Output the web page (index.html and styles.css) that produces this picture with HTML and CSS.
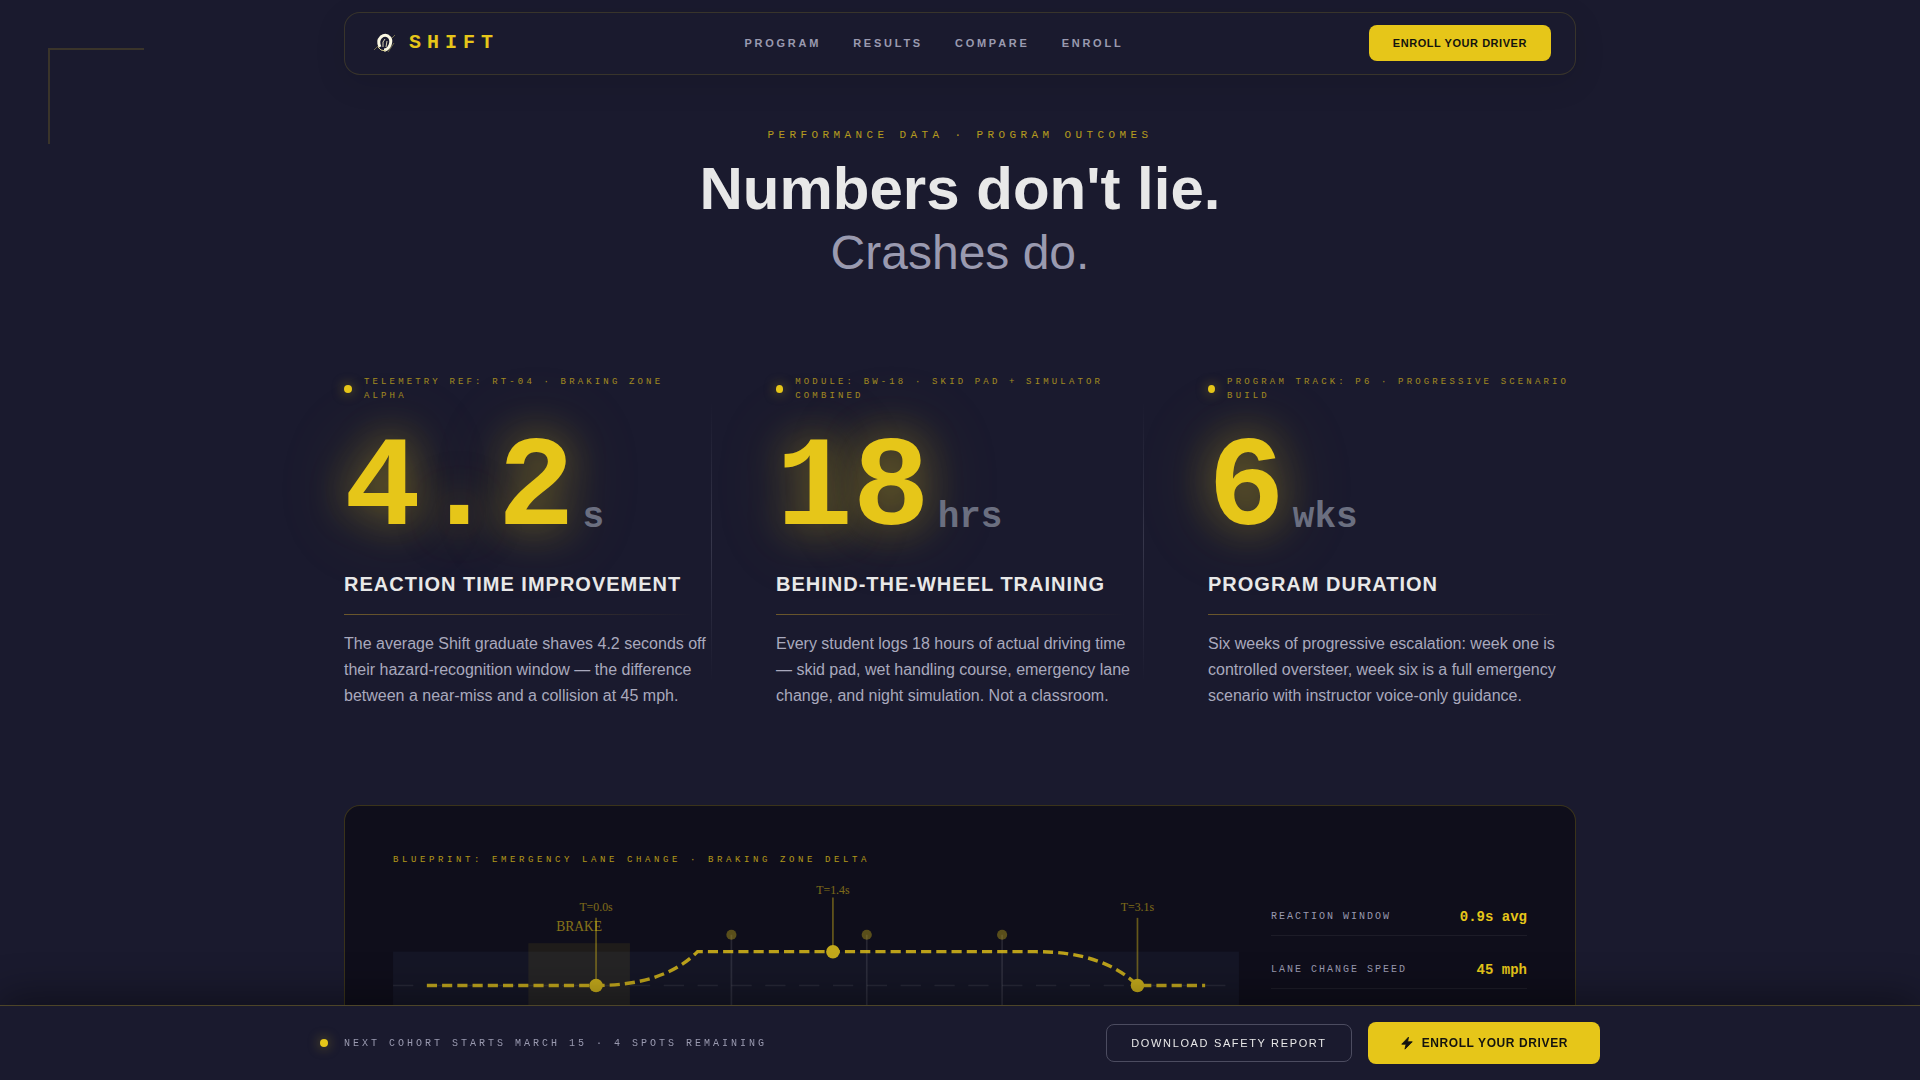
FILE: index.html
```html
<!DOCTYPE html>
<html lang="en">
<head>
<meta charset="utf-8">
<meta name="viewport" content="width=device-width, initial-scale=1">
<title>Shift — Performance Data</title>
<link rel="stylesheet" href="styles.css">
</head>
<body>
<div class="corner" aria-hidden="true"></div>

<header class="site-header">
  <a class="brand" href="#">
    <svg class="brand-mark" viewBox="0 0 32 32" aria-hidden="true">
      <path d="M5 23 L10 18 M22 12 L26 8 M9 14 L12 9 M19 25 L25 16" stroke="#6f6a4a" stroke-width="1" fill="none"/>
      <path d="M11 20 Q8 14 12 10 Q17 6 21 11 Q23 15 20 20 Q18 23 15 23" fill="none" stroke="#fbf8e2" stroke-width="3"/>
      <path d="M9 20 Q11 24 17 24" fill="none" stroke="#d9cf90" stroke-width="1"/>
      <path d="M14 20 V15 L16 12 M17 20 L18 14" fill="none" stroke="#d8d2b4" stroke-width="1"/>
    </svg>
    <span>SHIFT</span>
  </a>
  <nav class="site-nav" aria-label="Main">
    <a href="#program">PROGRAM</a>
    <a href="#results">RESULTS</a>
    <a href="#compare">COMPARE</a>
    <a href="#enroll">ENROLL</a>
  </nav>
  <button class="btn btn-small" type="button">ENROLL YOUR DRIVER</button>
</header>

<main class="page">
  <section class="hero">
    <p class="eyebrow">PERFORMANCE DATA · PROGRAM OUTCOMES</p>
    <h1>Numbers don't lie.<span>Crashes do.</span></h1>
  </section>

  <section class="stats" id="results">
    <article class="stat">
      <p class="stat-ref"><i class="dot"></i><span>TELEMETRY REF: RT-04 · BRAKING ZONE ALPHA</span></p>
      <p class="stat-value"><strong>4.2</strong><span>s</span></p>
      <h2>REACTION TIME IMPROVEMENT</h2>
      <p class="stat-text">The average Shift graduate shaves 4.2 seconds off their hazard-recognition window — the difference between a near-miss and a collision at 45 mph.</p>
    </article>
    <article class="stat">
      <p class="stat-ref"><i class="dot"></i><span>MODULE: BW-18 · SKID PAD + SIMULATOR COMBINED</span></p>
      <p class="stat-value"><strong>18</strong><span>hrs</span></p>
      <h2>BEHIND-THE-WHEEL TRAINING</h2>
      <p class="stat-text">Every student logs 18 hours of actual driving time — skid pad, wet handling course, emergency lane change, and night simulation. Not a classroom.</p>
    </article>
    <article class="stat">
      <p class="stat-ref"><i class="dot"></i><span>PROGRAM TRACK: P6 · PROGRESSIVE SCENARIO BUILD</span></p>
      <p class="stat-value"><strong>6</strong><span>wks</span></p>
      <h2>PROGRAM DURATION</h2>
      <p class="stat-text">Six weeks of progressive escalation: week one is controlled oversteer, week six is a full emergency scenario with instructor voice-only guidance.</p>
    </article>
  </section>

  <section class="blueprint">
    <p class="blueprint-title">BLUEPRINT: EMERGENCY LANE CHANGE · BRAKING ZONE DELTA</p>
    <div class="blueprint-body">
      <svg class="diagram" viewBox="0 0 500 120" role="img" aria-label="Emergency lane change path">
        <rect class="road" x="0" y="40" width="500" height="40"/>
        <line class="lane" x1="0" y1="60" x2="500" y2="60"/>
        <rect class="brake-zone" x="80" y="35" width="60" height="50"/>
        <text class="zone-label" x="110" y="28">BRAKE</text>
        <g class="cone"><line x1="200" y1="30" x2="200" y2="90"/><circle cx="200" cy="30" r="3"/></g>
        <g class="cone"><line x1="280" y1="30" x2="280" y2="90"/><circle cx="280" cy="30" r="3"/></g>
        <g class="cone"><line x1="360" y1="30" x2="360" y2="90"/><circle cx="360" cy="30" r="3"/></g>
        <path class="route" d="M20 60 H120 Q160 60 180 40 H380 Q420 40 440 60 H480"/>
        <g class="mark"><line x1="120" y1="60" x2="120" y2="20"/><circle cx="120" cy="60" r="4"/><text x="120" y="16">T=0.0s</text></g>
        <g class="mark"><line x1="260" y1="40" x2="260" y2="8"/><circle cx="260" cy="40" r="4"/><text x="260" y="6">T=1.4s</text></g>
        <g class="mark"><line x1="440" y1="60" x2="440" y2="20"/><circle cx="440" cy="60" r="4"/><text x="440" y="16">T=3.1s</text></g>
      </svg>
      <dl class="readout">
        <div><dt>REACTION WINDOW</dt><dd>0.9s avg</dd></div>
        <div><dt>LANE CHANGE SPEED</dt><dd>45 mph</dd></div>
      </dl>
    </div>
  </section>
</main>

<aside class="cta-bar">
  <div class="cta-inner">
    <p class="cta-note"><i class="dot"></i><span>NEXT COHORT STARTS MARCH 15 · 4 SPOTS REMAINING</span></p>
    <div class="cta-actions">
      <button class="btn-outline" type="button">DOWNLOAD SAFETY REPORT</button>
      <button class="btn btn-large" type="button">
        <svg viewBox="0 0 24 24" aria-hidden="true"><path d="M14.5 2 L3 14 H10.5 L8.5 22.5 L21 10 H13 Z" fill="currentColor" stroke="currentColor" stroke-width="1.5" stroke-linejoin="round"/></svg>
        <span>ENROLL YOUR DRIVER</span>
      </button>
    </div>
  </div>
</aside>
</body>
</html>
```
FILE: styles.css
```css
:root {
  --bg: #1a1a2e;
  --panel: #0f0e1b;
  --yellow: #e6c619;
  --text: #e8e8e8;
  --muted: #9a9ab0;
  --sans: "Liberation Sans", Arial, sans-serif;
  --mono: "Liberation Mono", "Courier New", monospace;
}

* { box-sizing: border-box; }

body {
  margin: 0;
  background: var(--bg);
  color: var(--text);
  font-family: var(--sans);
  position: relative;
}

p, h1, h2, dl, dd { margin: 0; }
a { text-decoration: none; color: inherit; }
button { font-family: inherit; cursor: pointer; }

.corner {
  position: absolute;
  left: 48px;
  top: 48px;
  width: 96px;
  height: 96px;
  border-left: 2px solid rgba(230, 190, 25, 0.16);
  border-top: 2px solid rgba(230, 190, 25, 0.16);
}

.site-header {
  position: sticky;
  top: 12px;
  z-index: 5;
  width: calc(100% - 48px);
  max-width: 1232px;
  margin: 12px auto 0;
  padding: 12px 24px 13px;
  display: flex;
  align-items: center;
  justify-content: space-between;
  background: var(--bg);
  border: 1px solid rgba(230, 198, 25, 0.15);
  border-radius: 16px;
  box-shadow: 0 8px 32px rgba(0, 0, 0, 0.1);
}

.brand {
  display: flex;
  align-items: center;
  gap: 8px;
  font: 700 20px/24px var(--mono);
  letter-spacing: 0.3em;
  color: var(--yellow);
}
.brand-mark { width: 32px; height: 32px; }

.site-nav {
  display: flex;
  gap: 32px;
  font-size: 11px;
  line-height: 12px;
  font-weight: 700;
  letter-spacing: 0.25em;
  color: var(--muted);
}

.btn {
  display: flex;
  align-items: center;
  gap: 8px;
  border: 0;
  border-radius: 8px;
  background: var(--yellow);
  color: #14140f;
  font-weight: 700;
  letter-spacing: 0.05em;
}
.btn-small { padding: 12px 24px; font-size: 11px; line-height: 12px; }
.btn-large { padding: 14px 32px; font-size: 12px; line-height: 14px; }
.btn-large svg { width: 14px; height: 14px; }

.page {
  max-width: 1280px;
  margin: 0 auto;
  padding: 0 24px 180px;
}

.hero { padding: 52px 0 88px; text-align: center; }
.eyebrow {
  font: 11px/16px var(--mono);
  letter-spacing: 0.4em;
  color: var(--yellow);
  opacity: 0.75;
  margin-bottom: 16px;
}
h1 { font-size: 60px; line-height: 60px; font-weight: 700; }
h1 span {
  display: block;
  font-size: 48px;
  line-height: 68px;
  font-weight: 400;
  color: var(--muted);
}

.stats {
  display: grid;
  grid-template-columns: repeat(3, 1fr);
  gap: 64px;
}
.stat { position: relative; }
.stat:not(:last-child)::after {
  content: "";
  position: absolute;
  right: 0;
  top: 8%;
  bottom: 8%;
  width: 1px;
  background: linear-gradient(to bottom, transparent, rgba(200, 200, 220, 0.16), transparent);
}
.dot {
  width: 8px;
  height: 8px;
  border-radius: 50%;
  background: var(--yellow);
  box-shadow: 0 0 12px rgba(230, 198, 25, 0.5);
}
.stat-ref {
  display: flex;
  align-items: center;
  gap: 12px;
  font: 9px/14px var(--mono);
  letter-spacing: 0.35em;
  color: var(--yellow);
}
.stat-ref span { opacity: 0.65; }
.stat-value {
  display: flex;
  align-items: flex-end;
  gap: 8px;
  margin: 23px 0 16px;
  font-family: var(--mono);
  font-weight: 700;
}
.stat-value strong {
  font-size: 128px;
  line-height: 128px;
  color: var(--yellow);
  text-shadow: 0 0 40px rgba(230, 198, 25, 0.4), 0 0 80px rgba(230, 198, 25, 0.25);
}
.stat-value span {
  font-size: 36px;
  line-height: 36px;
  margin-bottom: 18px;
  color: #6b6f80;
}
.stat h2 {
  font-size: 20px;
  line-height: 28px;
  letter-spacing: 0.05em;
}
.stat h2::after {
  content: "";
  display: block;
  height: 1px;
  margin: 16px 0;
  background: linear-gradient(to right, rgba(230, 180, 40, 0.4), transparent 95%);
}
.stat-text { font-size: 16px; line-height: 26px; color: #a9a9bd; }

.blueprint {
  margin-top: 96px;
  padding: 48px;
  background: var(--panel);
  border: 1px solid rgba(230, 198, 25, 0.2);
  border-radius: 16px;
}
.blueprint-title {
  font: 9px/12px var(--mono);
  letter-spacing: 0.4em;
  color: var(--yellow);
  opacity: 0.75;
  margin-bottom: 18px;
}
.blueprint-body {
  display: grid;
  grid-template-columns: 1fr 256px;
  gap: 32px;
  align-items: start;
}
.diagram { display: block; width: 100%; overflow: visible; }
.diagram text {
  font-family: "Liberation Serif", serif;
  font-size: 7px;
  text-anchor: middle;
  fill: var(--yellow);
  opacity: 0.5;
}
.diagram .zone-label { font-size: 8px; opacity: 0.55; }
.road { fill: rgba(70, 90, 130, 0.11); }
.lane { stroke: rgba(255, 255, 255, 0.08); stroke-width: 1; stroke-dasharray: 12 8; }
.brake-zone { fill: rgba(230, 198, 25, 0.08); }
.cone line { stroke: rgba(255, 255, 255, 0.1); stroke-width: 1; }
.cone circle { fill: var(--yellow); opacity: 0.35; }
.route { fill: none; stroke: var(--yellow); stroke-width: 2; stroke-dasharray: 6 3; opacity: 0.8; }
.mark line { stroke: var(--yellow); stroke-width: 1; opacity: 0.4; }
.mark circle { fill: #c2a81b; }

.readout { display: grid; gap: 24px; padding-top: 23px; }
.readout div {
  display: flex;
  align-items: center;
  justify-content: space-between;
  padding-bottom: 8px;
  border-bottom: 1px solid rgba(255, 255, 255, 0.06);
}
.readout dt { font: 10px/20px var(--mono); letter-spacing: 0.2em; color: var(--muted); }
.readout dd { font: 700 14px/20px var(--mono); color: var(--yellow); }

.cta-bar {
  position: fixed;
  left: 0;
  right: 0;
  bottom: 0;
  z-index: 6;
  padding: 16px 0;
  background: var(--bg);
  border-top: 1px solid rgba(230, 198, 25, 0.25);
  box-shadow: 0 -8px 40px rgba(0, 0, 0, 0.4);
}
.cta-inner {
  max-width: 1280px;
  margin: 0 auto;
  display: flex;
  align-items: center;
  justify-content: space-between;
}
.cta-note {
  display: flex;
  align-items: center;
  gap: 16px;
  font: 10px/15px var(--mono);
  letter-spacing: 0.3em;
  color: var(--muted);
}
.cta-actions { display: flex; align-items: center; gap: 16px; }
.btn-outline {
  padding: 12px 24px;
  border: 1px solid #4c4c60;
  border-radius: 8px;
  background: transparent;
  color: var(--text);
  font-size: 11px;
  line-height: 12px;
  letter-spacing: 0.15em;
}
```
